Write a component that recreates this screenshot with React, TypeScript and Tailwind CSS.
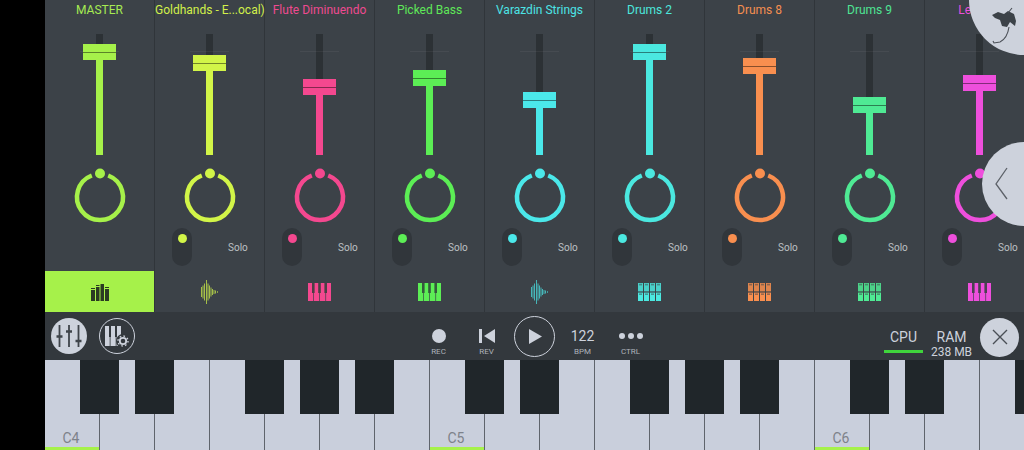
import { Fragment } from "react";

type Kind = "bars" | "wave" | "piano" | "grid";

const channels: {
  name: string;
  top: number;
  kind: Kind;
  text: string;
  bg: string;
  stroke: string;
  fill: string;
}[] = [
  { name: "MASTER", top: 10, kind: "bars", text: "text-[#a6ea52]", bg: "bg-[#a6f14a]", stroke: "stroke-[#a6f14a]", fill: "fill-[#a6f14a]" },
  { name: "Goldhands - E...ocal)", top: 21, kind: "wave", text: "text-[#d2f04a]", bg: "bg-[#d2f548]", stroke: "stroke-[#d2f548]", fill: "fill-[#d2f548]" },
  { name: "Flute Diminuendo", top: 45, kind: "piano", text: "text-[#ee4a90]", bg: "bg-[#f4488f]", stroke: "stroke-[#f4488f]", fill: "fill-[#f4488f]" },
  { name: "Picked Bass", top: 36, kind: "piano", text: "text-[#5fe858]", bg: "bg-[#5cee55]", stroke: "stroke-[#5cee55]", fill: "fill-[#5cee55]" },
  { name: "Varazdin Strings", top: 58, kind: "wave", text: "text-[#4ce4e6]", bg: "bg-[#4be8ea]", stroke: "stroke-[#4be8ea]", fill: "fill-[#4be8ea]" },
  { name: "Drums 2", top: 10, kind: "grid", text: "text-[#4ce6dc]", bg: "bg-[#4be8e0]", stroke: "stroke-[#4be8e0]", fill: "fill-[#4be8e0]" },
  { name: "Drums 8", top: 24, kind: "grid", text: "text-[#f58f50]", bg: "bg-[#f98f4f]", stroke: "stroke-[#f98f4f]", fill: "fill-[#f98f4f]" },
  { name: "Drums 9", top: 63, kind: "grid", text: "text-[#4fe494]", bg: "bg-[#4fea94]", stroke: "stroke-[#4fea94]", fill: "fill-[#4fea94]" },
  { name: "Lead 12", top: 41, kind: "piano", text: "text-[#ea50da]", bg: "bg-[#ee4fdc]", stroke: "stroke-[#ee4fdc]", fill: "fill-[#ee4fdc]" },
];

const blackKeys = [35, 90, 200, 255, 310, 420, 475, 585, 640, 695, 805, 860, 970];
const whiteKeys = Array.from({ length: 18 }, (_, i) => i);
const octaves: Record<number, string> = { 0: "C4", 7: "C5", 14: "C6" };

function TrackIcon({ kind, fill }: { kind: Kind; fill: string }) {
  if (kind === "bars") {
    return (
      <svg width="20" height="18" viewBox="0 0 20 18" className="fill-[#2a3a22]">
        <rect x="1" y="7" width="4" height="11" />
        <rect x="6" y="4" width="3.5" height="14" />
        <rect x="10.5" y="1" width="3.5" height="17" />
        <rect x="15" y="6" width="4" height="12" />
        <rect x="1" y="5" width="4" height="1" />
        <rect x="6" y="2" width="3.5" height="1" />
        <rect x="15" y="4" width="4" height="1" />
      </svg>
    );
  }
  if (kind === "wave") {
    const bars = [
      [0, 10], [1.5, 13], [3, 17], [5, 24], [6.5, 17], [8, 13], [9.5, 9], [11, 6], [12.5, 4], [14, 3], [16, 1.5],
    ];
    return (
      <svg width="18" height="26" viewBox="0 0 18 26" className={`${fill} opacity-70`}>
        {bars.map(([x, h]) => (
          <rect key={x} x={x} y={13 - h / 2} width="1" height={h} />
        ))}
      </svg>
    );
  }
  if (kind === "piano") {
    return (
      <svg width="23" height="18" viewBox="0 0 23 18">
        <rect x="0" y="0" width="23" height="18" className={fill} />
        <rect x="4" y="0" width="2.6" height="10" className="fill-[#2e3f38]" opacity="0.85" />
        <rect x="10.2" y="0" width="2.6" height="10" className="fill-[#2e3f38]" opacity="0.85" />
        <rect x="16.4" y="0" width="2.6" height="10" className="fill-[#2e3f38]" opacity="0.85" />
        <rect x="5" y="10" width="0.7" height="8" className="fill-[#3c4248]" />
        <rect x="11.2" y="10" width="0.7" height="8" className="fill-[#3c4248]" />
        <rect x="17.4" y="10" width="0.7" height="8" className="fill-[#3c4248]" />
      </svg>
    );
  }
  return (
    <svg width="23" height="18" viewBox="0 0 23 18" className={fill}>
      {[0, 6, 12, 18].map((x) => (
        <Fragment key={x}>
          <rect x={x} y="0" width="5" height="8.4" opacity="0.85" />
          <rect x={x} y="9.6" width="5" height="8.4" />
          <rect x={x + 1} y="0.8" width="3" height="1.6" className="fill-[#3c4248]" opacity="0.5" />
          <rect x={x + 1} y="10.4" width="3" height="1.6" className="fill-[#3c4248]" opacity="0.5" />
        </Fragment>
      ))}
    </svg>
  );
}

function Channel({ ch, index }: { ch: (typeof channels)[number]; index: number }) {
  const selected = index === 0;
  return (
    <div className="w-[110px] h-[312px] shrink-0 flex flex-col items-center border-r border-[#30353a]">
      <div className={`h-[20px] w-full text-center text-[12px] leading-[20px] whitespace-nowrap ${ch.text}`}>
        {ch.name}
      </div>

      {/* fader */}
      <div className="relative mt-[14px] h-[121px] w-[33px] flex flex-col items-center">
        <div className="absolute left-[-3px] right-[-3px] top-[17px] h-px bg-white/5" />
        <div className="w-[7px] bg-[#2c3135]" style={{ height: ch.top }} />
        <div className={`relative w-[33px] h-[16px] shrink-0 flex items-center ${ch.bg}`}>
          <div className="h-px w-full bg-black/45" />
        </div>
        <div className={`w-[7px] flex-1 ${ch.bg}`} />
      </div>

      {/* knob */}
      <svg width="60" height="60" viewBox="0 0 60 60" className="mt-[12px] shrink-0">
        <path d="M38.2 8.5A23 23 0 1 1 21.8 8.5" fill="none" strokeWidth="4.5" className={ch.stroke} />
        <circle cx="30" cy="6.5" r="5" className={ch.fill} />
      </svg>

      {/* mute toggle + solo */}
      <div className="h-[38px] w-full mt-[1px] flex items-center pl-[17px] shrink-0">
        {!selected && (
          <>
            <div className="w-[20px] h-[38px] rounded-full bg-[#31363b] flex justify-center pt-[6px]">
              <div className={`w-[9px] h-[9px] rounded-full ${ch.bg}`} />
            </div>
            <span className="ml-[36px] text-[10px] text-[#bcc0c4]">Solo</span>
          </>
        )}
      </div>

      {/* track type */}
      <div className={`mt-[5px] w-full flex-1 flex items-center justify-center ${selected ? ch.bg : ""}`}>
        <TrackIcon kind={ch.kind} fill={ch.fill} />
      </div>
    </div>
  );
}

function TransportItem({ label, children }: { label: string; children: React.ReactNode }) {
  return (
    <div className="w-[48px] h-[48px] flex flex-col items-center">
      <div className="h-[22px] mt-[13px] flex items-center justify-center text-[#cdd2dc]">{children}</div>
      <span className="text-[8px] leading-[10px] text-[#aeb3bb]">{label}</span>
    </div>
  );
}

export default function App() {
  return (
    <div className="relative flex w-[1024px] h-[450px] overflow-hidden bg-black font-['Roboto',sans-serif]">
      <div className="w-[45px] shrink-0" />

      <div className="flex-1 min-w-0 flex flex-col">
        {/* channels */}
        <div className="flex h-[312px] bg-[#3c4248] overflow-hidden">
          {channels.map((ch, i) => (
            <Channel key={ch.name} ch={ch} index={i} />
          ))}
        </div>

        {/* transport bar */}
        <div className="h-[48px] bg-[#33383d] grid grid-cols-[1fr_auto_1fr] items-center">
          <div className="flex items-center gap-[12px] pl-[6px]">
            <div className="w-[36px] h-[36px] rounded-full bg-[#cdd2dc] flex items-center justify-center">
              <svg width="26" height="22" viewBox="0 0 26 22" className="stroke-[#3f444a]" fill="none">
                <path d="M3.5 0v22M13 0v22M22.5 0v22" strokeWidth="1.8" />
                <path d="M0.5 11.5h6M10 6.5h6M19.5 16h6" strokeWidth="2.4" />
              </svg>
            </div>
            <div className="w-[36px] h-[36px] rounded-full border border-[#cdd2dc] flex items-center justify-center">
              <svg width="26" height="24" viewBox="0 0 26 24">
                <path d="M1 2h16v20H1z" className="fill-[#cdd2dc]" />
                <path d="M5 2h2v11H5zM11 2h2v11h-2zM5.7 13h.8v9h-.8zM11.7 13h.8v9h-.8z" className="fill-[#33383d]" />
                <circle cx="19" cy="17" r="7" className="fill-[#33383d]" />
                <circle cx="19" cy="17" r="3.2" fill="none" stroke="#cdd2dc" strokeWidth="1.8" />
                <circle cx="19" cy="17" r="5" fill="none" stroke="#cdd2dc" strokeWidth="1.4" strokeDasharray="1.6 2.3" />
              </svg>
            </div>
          </div>

          <div className="flex items-center">
            <TransportItem label="REC">
              <div className="w-[14px] h-[14px] rounded-full bg-[#cdd2dc]" />
            </TransportItem>
            <TransportItem label="REV">
              <svg width="16" height="14" viewBox="0 0 16 14" className="fill-[#cdd2dc]">
                <rect x="0" y="0" width="3" height="14" />
                <path d="M16 0v14L5 7z" />
              </svg>
            </TransportItem>
            <div className="w-[48px] flex justify-center">
              <div className="w-[41px] h-[41px] rounded-full border border-[#cdd2dc] flex items-center justify-center">
                <svg width="13" height="15" viewBox="0 0 13 15" className="fill-[#cdd2dc] ml-[1px]">
                  <path d="M0 0l13 7.5L0 15z" />
                </svg>
              </div>
            </div>
            <TransportItem label="BPM">
              <span className="text-[14px] text-[#cdd2dc]">122</span>
            </TransportItem>
            <TransportItem label="CTRL">
              <div className="flex gap-[3px]">
                <div className="w-[6px] h-[6px] rounded-full bg-[#cdd2dc]" />
                <div className="w-[6px] h-[6px] rounded-full bg-[#cdd2dc]" />
                <div className="w-[6px] h-[6px] rounded-full bg-[#cdd2dc]" />
              </div>
            </TransportItem>
          </div>

          <div className="flex items-start justify-end gap-[8px] pr-[5px]">
            <div className="w-[39px] pt-[14px] flex flex-col items-center">
              <span className="text-[14px] leading-[18px] text-[#cdd2dc]">CPU</span>
              <div className="mt-[4px] h-[3px] w-full bg-[#3fd43c]" />
            </div>
            <div className="w-[41px] pt-[14px] flex flex-col items-center">
              <span className="text-[14px] leading-[18px] text-[#cdd2dc]">RAM</span>
              <span className="-mt-px text-[12px] leading-[14px] text-[#cdd2dc] whitespace-nowrap">238 MB</span>
            </div>
            <div className="mt-[4px] w-[39px] h-[39px] rounded-full bg-[#cdd2dc] flex items-center justify-center">
              <svg width="16" height="16" viewBox="0 0 16 16" className="stroke-[#4a4f56]" strokeWidth="1.4">
                <path d="M1 1l14 14M15 1L1 15" />
              </svg>
            </div>
          </div>
        </div>

        {/* keyboard */}
        <div className="relative flex flex-1 bg-[#c9cfdc]">
          {whiteKeys.map((i) => (
            <div
              key={i}
              className="relative w-[55px] h-[90px] shrink-0 border-r-[1.5px] border-[#5f646c] flex items-end justify-center"
            >
              {octaves[i] && (
                <>
                  <span className="mb-[3px] mr-[2px] text-[14px] leading-[18px] text-[#7d828a]">{octaves[i]}</span>
                  <div className="absolute bottom-0 left-0 right-0 h-[3px] bg-[#a6f14a]" />
                </>
              )}
            </div>
          ))}
          {blackKeys.map((x) => (
            <div
              key={x}
              className="absolute top-0 w-[39px] h-[54px] bg-[#20262a]"
              style={{ left: x }}
            />
          ))}
        </div>
      </div>

      {/* floating buttons at the right edge */}
      <div className="absolute right-[-55px] top-[-55px] w-[110px] h-[110px] rounded-full bg-[#cdd2dc]">
        <svg width="26" height="38" viewBox="0 0 26 38" className="absolute left-[23px] top-[62px]">
          <path d="M0 8l6-3 6 2 4-3 6 3 2 7-1 5-5-4-3 5-5-1-2-6-5-2z" className="fill-[#3c4248]" />
          <path d="M20 1l-4 5M17 20c-1 7-3 12-9 15l-6 1-1-2" fill="none" stroke="#4a4f56" strokeWidth="1.1" />
        </svg>
      </div>
      <div className="absolute right-[-42px] top-[142px] w-[84px] h-[84px] rounded-full bg-[#cdd2dc]">
        <svg width="13" height="33" viewBox="0 0 13 33" className="absolute left-[13px] top-[25px]" fill="none" stroke="#5c6168" strokeWidth="1.3">
          <path d="M12 1L1 17l11 15" />
        </svg>
      </div>
    </div>
  );
}
